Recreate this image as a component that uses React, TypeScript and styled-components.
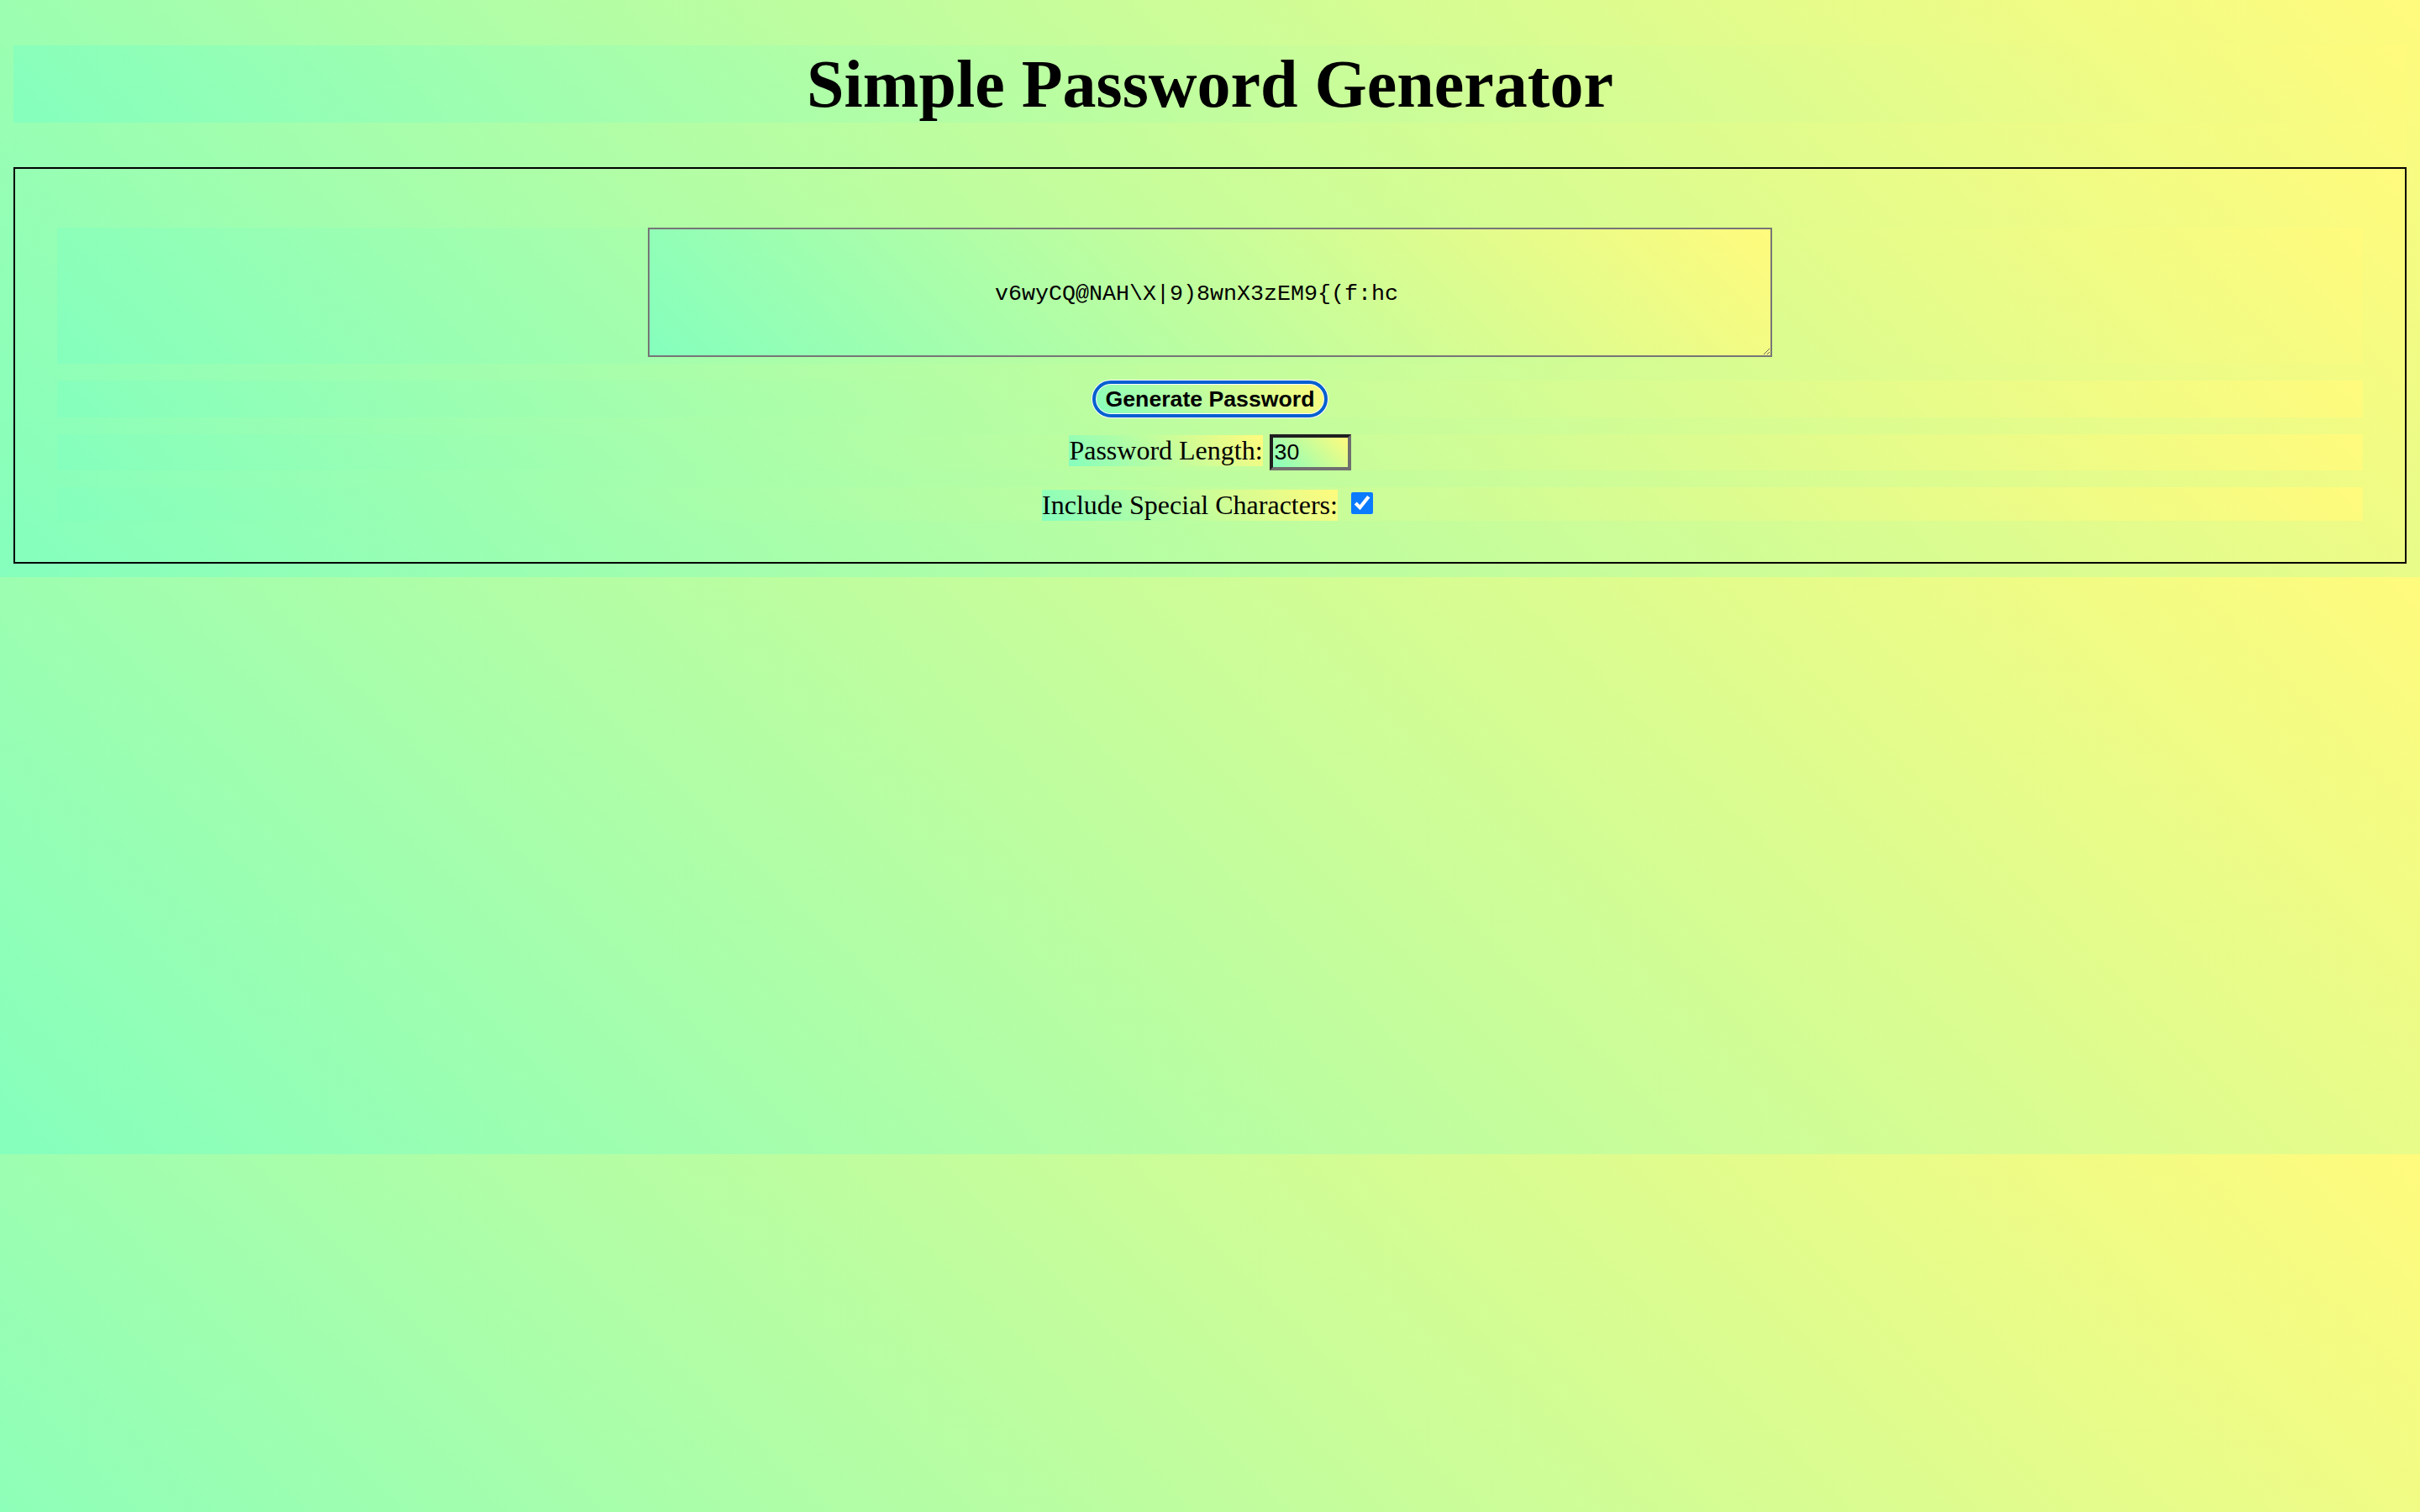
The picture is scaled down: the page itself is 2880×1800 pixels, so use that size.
import React, { useState } from 'react'
import styled, { createGlobalStyle, css } from 'styled-components'

const gradient = css`
  background-color: #85ffbd;
  background-image: linear-gradient(45deg, #85ffbd 0%, #fffb7d 100%);
`

const GlobalStyle = createGlobalStyle`
  html {
    ${gradient}
  }

  body {
    margin: 53.6px 16px 16px;
    ${gradient}
    font-family: 'Liberation Serif', 'Times New Roman', serif;
    color: #000;
  }
`

const LETTERS = 'abcdefghijklmnopqrstuvwxyzABCDEFGHIJKLMNOPQRSTUVWXYZ0123456789'
const SPECIALS = '!@#$%^&*()_+-={}[]|\\:;<>,.?/~'

const lagPassord = (lengde: number, medSpesial: boolean) => {
  const tegn = medSpesial ? LETTERS + SPECIALS : LETTERS
  let resultat = ''
  for (let i = 0; i < lengde; i++) {
    resultat += tegn.charAt(Math.floor(Math.random() * tegn.length))
  }
  return resultat
}

const App = () => {
  const [passord, settPassord] = useState('v6wyCQ@NAH\\X|9)8wnX3zEM9{(f:hc')
  const [lengde, settLengde] = useState(30)
  const [spesial, settSpesial] = useState(true)

  return (
    <>
      <GlobalStyle />
      <Title>Simple Password Generator</Title>
      <Panel>
        <Row $h={162} $align="flex-start">
          <OutputArea value={passord} readOnly />
        </Row>
        <Row $h={44} $align="center">
          <GenerateButton onClick={() => settPassord(lagPassord(lengde, spesial))}>
            Generate Password
          </GenerateButton>
        </Row>
        <Row $h={43} $align="baseline">
          <FieldLabel htmlFor="lengde">Password Length:</FieldLabel>
          <LengthInput
            id="lengde"
            type="number"
            min={4}
            max={128}
            value={lengde}
            onChange={e => settLengde(Number(e.target.value))}
          />
        </Row>
        <Row $h={40} $align="flex-end">
          <FieldLabel htmlFor="spesial">Include Special Characters:</FieldLabel>
          <SpecialCheckbox
            id="spesial"
            type="checkbox"
            checked={spesial}
            onChange={e => settSpesial(e.target.checked)}
          />
        </Row>
      </Panel>
    </>
  )
}

const Title = styled.h1`
  ${gradient}
  margin: 0 0 53.6px;
  font-size: 80px;
  line-height: 92px;
  font-weight: bold;
  text-align: center;
`

const Panel = styled.div`
  ${gradient}
  border: 2px solid #000;
  padding: 70px 50px 49px;
  display: flex;
  flex-direction: column;
  gap: 20px;
`

const Row = styled.div<{ $h: number; $align: string }>`
  ${gradient}
  height: ${props => props.$h}px;
  display: flex;
  justify-content: center;
  align-items: ${props => props.$align};
  gap: 8px;
`

const OutputArea = styled.textarea`
  ${gradient}
  box-sizing: border-box;
  width: 1338px;
  height: 154px;
  margin: 0;
  border: 2px solid #767676;
  padding: 62px 32px 0 0;
  font-family: 'Liberation Mono', 'Courier New', monospace;
  font-size: 26.67px;
  line-height: 30px;
  text-align: center;
  color: #000;
  outline: none;
`

const GenerateButton = styled.button`
  ${gradient}
  box-sizing: border-box;
  height: 44px;
  margin: 0;
  padding: 0 12px;
  border: 4px solid #0560d0;
  border-radius: 22px;
  box-shadow: 0 0 0 1px #fff, inset 0 0 0 1px #fff;
  font-family: 'Liberation Sans', Arial, sans-serif;
  font-size: 26.67px;
  font-weight: bold;
  color: #000;
  cursor: pointer;
`

const FieldLabel = styled.label`
  ${gradient}
  font-size: 32px;
  line-height: 37px;
`

const LengthInput = styled.input`
  ${gradient}
  box-sizing: border-box;
  width: 97px;
  height: 43px;
  margin: 0;
  padding: 0 2px;
  border: 4px solid;
  border-color: #1f1f1f #6f6f6f #6f6f6f #1f1f1f;
  font-family: 'Liberation Sans', Arial, sans-serif;
  font-size: 26.67px;
  color: #000;
  outline: none;
`

const SpecialCheckbox = styled.input`
  width: 26px;
  height: 26px;
  margin: 0 6px 8px 8px;
  accent-color: #0a7aff;
`

export default App
